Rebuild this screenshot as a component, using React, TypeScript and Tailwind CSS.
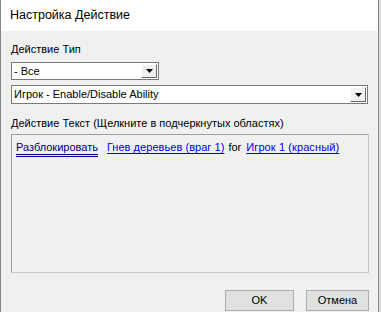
function DropArrow() {
    return (
        <div className="flex h-full w-[16px] items-center justify-center border border-t-white border-l-white border-r-[#696969] border-b-[#696969] bg-[#f0f0f0]">
            <svg width="7" height="4" viewBox="0 0 7 4">
                <path d="M0 0h7L3.5 4z" fill="#000" />
            </svg>
        </div>
    );
}

function Select({ value, width }: { value: string; width: string }) {
    return (
        <div className={`flex ${width} items-stretch border border-[#7a7a7a] bg-white p-[1px]`}>
            <span className="flex-1 pl-[1px] leading-[15px]">{value}</span>
            <DropArrow />
        </div>
    );
}

export default function App() {
    return (
        <div className="flex h-[312px] w-[381px] overflow-hidden bg-[#dcdcdc] font-['Liberation_Sans',sans-serif] text-[11px] text-black">
            <div className="flex h-full w-[379px] flex-col border-l border-r border-[#858585]">
                <div className="flex h-[31px] items-center bg-white pl-[9px] text-[12.5px]">
                    Настройка Действие
                </div>
                <div className="flex flex-1 flex-col bg-[#f0f0f0] pl-[10px] pt-[12px]">
                    <div className="h-[13px] leading-[13px]">Действие Тип</div>
                    <div className="mt-[6px] h-[18px]">
                        <Select value="- Все" width="w-[148px] h-[18px]" />
                    </div>
                    <div className="mt-[5px] h-[19px]">
                        <Select value="Игрок - Enable/Disable Ability" width="w-[357px] h-[19px]" />
                    </div>
                    <div className="mt-[13px] h-[13px] leading-[13px]">
                        Действие Текст (Щелкните в подчеркнутых областях)
                    </div>
                    <div className="mt-[4px] h-[139px] w-[358px] border border-t-[#a0a0a0] border-l-[#a0a0a0] border-r-[#c8c8c8] border-b-[#c8c8c8] bg-[#f0f0f0] pl-[4px] pt-[6px]">
                        <div className="flex items-start leading-[13px]">
                            <span className="border-b-[3px] border-double border-[#000080] pb-[1px] leading-[12px] text-[#000080]">
                                Разблокировать
                            </span>
                            <span className="ml-[9px] tracking-[0.05px] text-[#0000ee] underline underline-offset-[2px]">
                                Гнев деревьев (враг 1)
                            </span>
                            <span className="ml-[4px]">for</span>
                            <span className="ml-[5px] tracking-[0.1px] text-[#0000ee] underline underline-offset-[2px]">
                                Игрок 1 (красный)
                            </span>
                        </div>
                    </div>
                    <div className="mt-[17px] flex gap-[12px] pl-[214px]">
                        <button className="h-[21px] w-[69px] border border-[#adadad] bg-[#e1e1e1] text-[11px]">
                            OK
                        </button>
                        <button className="h-[21px] w-[63px] border border-[#adadad] bg-[#e1e1e1] text-[11px]">
                            Отмена
                        </button>
                    </div>
                </div>
            </div>
        </div>
    );
}
